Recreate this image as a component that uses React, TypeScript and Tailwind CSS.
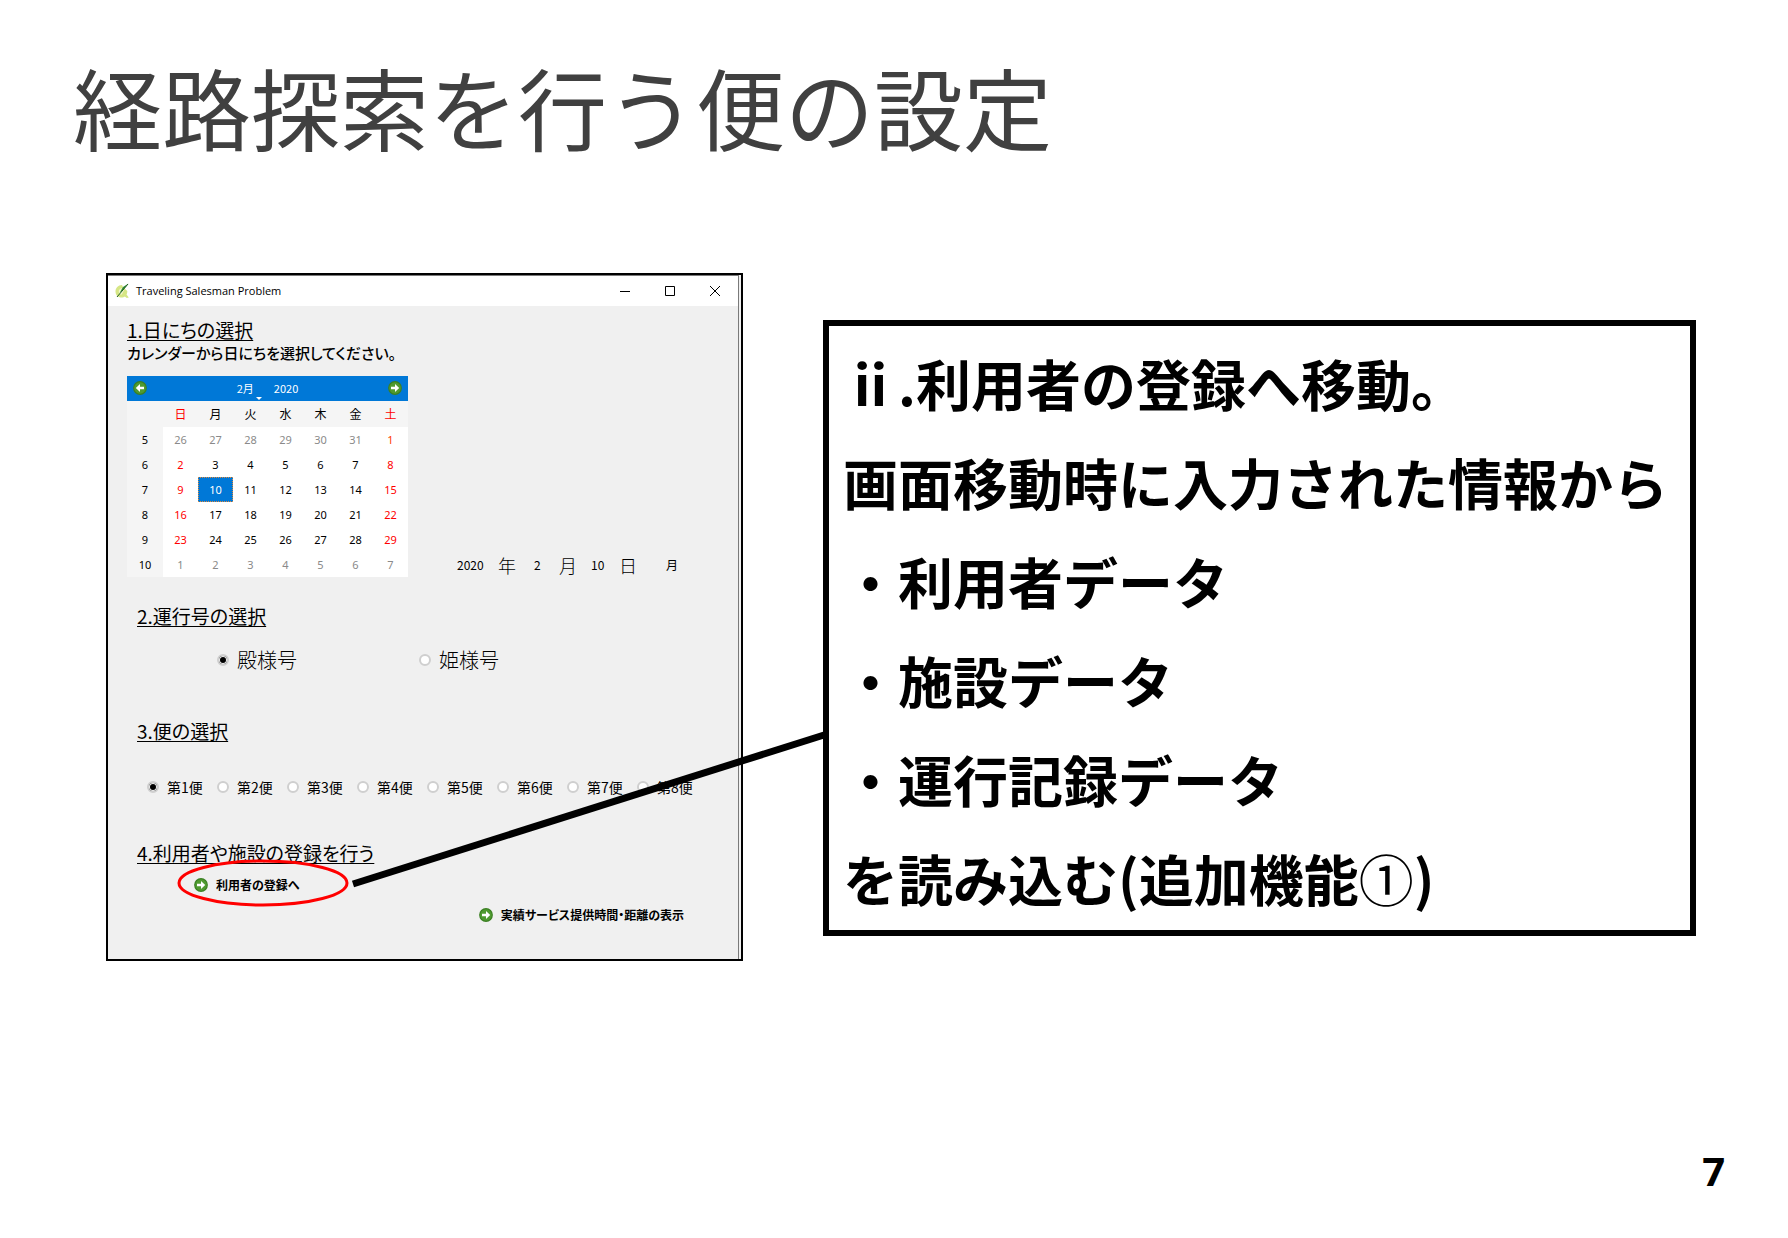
import React from "react";

const weekdays = ["日", "月", "火", "水", "木", "金", "土"];

const weeks = [
  { no: 5, days: [26, 27, 28, 29, 30, 31, 1] },
  { no: 6, days: [2, 3, 4, 5, 6, 7, 8] },
  { no: 7, days: [9, 10, 11, 12, 13, 14, 15] },
  { no: 8, days: [16, 17, 18, 19, 20, 21, 22] },
  { no: 9, days: [23, 24, 25, 26, 27, 28, 29] },
  { no: 10, days: [1, 2, 3, 4, 5, 6, 7] },
];

const trips = ["第1便", "第2便", "第3便", "第4便", "第5便", "第6便", "第7便", "第8便"];

const callout = ["ⅱ.利用者の登録へ移動。", "画面移動時に入力された情報から", "・利用者データ", "・施設データ", "・運行記録データ"];

function ArrowIcon({ left = false }: { left?: boolean }) {
  return (
    <svg viewBox="0 0 14 14" className={left ? "size-[14px] shrink-0 rotate-180" : "size-[14px] shrink-0"} aria-hidden="true">
      <circle cx="7" cy="7" r="6.9" fill="#3a7f22" />
      <circle cx="7" cy="7" r="5.800" fill="#4f9a30" />
      <path d="M3 5.700h4V3.100L11.200 7 7 10.900V8.300H3z" fill="#fff" />
    </svg>
  );
}

function AppLogo() {
  return (
    <svg viewBox="0 0 16 16" className="size-4" aria-hidden="true">
      <path d="M8 2C4 2 1.500 5 1.500 8.500S4 14.500 7.500 14.500c1.500 0 2.500-.4 3.300-1l2 1.500 2-.5-2.300-3c.6-1 .8-2 .8-3.500L9 4z" fill="#d6e685" />
      <path d="M8 5C6 5.500 4.500 7 4.800 9s1.600 2.600 3 2.400l2-4z" fill="#f3f7cf" />
      <path d="M14.500.5L9 4 5.500 10 9.500 6.500z" fill="#2f8a35" />
      <path d="M14 1L3 14" stroke="#1f5f22" fill="none" />
    </svg>
  );
}

function Radio({ name, label, checked = false, big = false }: { name: string; label: string; checked?: boolean; big?: boolean }) {
  return (
    <label className={big ? "flex items-center gap-2 text-[20px] leading-6 font-light" : "flex w-[70px] items-center gap-2 text-[14px] leading-5"}>
      <input
        type="radio"
        name={name}
        defaultChecked={checked}
        className="size-3 shrink-0 appearance-none rounded-full border-2 border-[#cfcfcf] bg-white checked:bg-black checked:shadow-[inset_0_0_0_1px_#f4f4f4]"
      />
      <span className="whitespace-nowrap">{label}</span>
    </label>
  );
}

function Heading({ children }: { children: React.ReactNode }) {
  return (
    <h2 className="text-[19px] leading-6 underline decoration-1 underline-offset-2 [font-feature-settings:'palt']">{children}</h2>
  );
}

function dayColour(week: number, col: number, day: number) {
  if (day === 10 && week === 2) return "bg-[#0078d7] text-white outline-1 -outline-offset-1 outline-dotted outline-[#e08a3c]";
  if (week === 0 && col === 6) return "text-[#ff3c00]";
  if (week === 0 || week === 5) return "text-[#8a8a8a]";
  if (col === 0 || col === 6) return "text-[#ff0000]";
  return "text-black";
}

function Calendar() {
  return (
    <div className="w-[281px] bg-white">
      <div className="flex h-[25px] items-center bg-[#0078d7] px-[6px] pb-[2px] text-[11px] leading-4 text-white">
        <button type="button" aria-label="前の月">
          <ArrowIcon left />
        </button>
        <div className="flex flex-1 items-center justify-center gap-5">
          <button type="button" className="relative">
            2月
            <span className="absolute -right-2 -bottom-1 border-x-[3px] border-t-[3px] border-x-transparent border-t-white" />
          </button>
          <button type="button">2020</button>
        </div>
        <button type="button" aria-label="次の月">
          <ArrowIcon />
        </button>
      </div>
      <table className="w-full table-fixed border-collapse text-center">
        <colgroup>
          <col className="w-9" />
          {weekdays.map((d) => (
            <col key={d} />
          ))}
        </colgroup>
        <thead>
          <tr className="h-[26px] bg-[#f5f5f5] text-[12px] leading-4">
            <td />
            {weekdays.map((d, i) => (
              <th key={d} scope="col" className={i === 0 || i === 6 ? "p-0 font-normal text-[#ff0000]" : "p-0 font-normal"}>
                {d}
              </th>
            ))}
          </tr>
        </thead>
        <tbody className="font-['Noto_Sans','Noto_Sans_CJK_JP',sans-serif] text-[11px] leading-4">
          {weeks.map((w, r) => (
            <tr key={w.no} className="h-[25px]">
              <th scope="row" className="bg-[#f5f5f5] p-0 font-normal">
                {w.no}
              </th>
              {w.days.map((d, c) => (
                <td key={c} className={`p-0 ${dayColour(r, c, d)}`}>
                  {d}
                </td>
              ))}
            </tr>
          ))}
        </tbody>
      </table>
    </div>
  );
}

function AppWindow() {
  return (
    <section className="w-[637px] shrink-0 border-2 border-black bg-[#f0f0f0] text-black">
      <div className="mr-[2px] border-r border-[#7a7a7a]">
        <header className="flex h-[31px] items-center border-t border-[#7a7a7a] bg-white pl-[6px]">
          <AppLogo />
          <span className="ml-[6px] flex-1 font-['Open_Sans','Noto_Sans',sans-serif] text-[11px] leading-4">Traveling Salesman Problem</span>
          <div className="flex items-center gap-[35px] pr-[18px] pb-px">
            <button type="button" aria-label="最小化">
              <svg viewBox="0 0 10 10" className="size-[10px]" stroke="#000" fill="none">
                <path d="M0 5.500h10" />
              </svg>
            </button>
            <button type="button" aria-label="最大化">
              <svg viewBox="0 0 10 10" className="size-[10px]" stroke="#000" fill="none">
                <path d="M.5.5h9v9h-9z" />
              </svg>
            </button>
            <button type="button" aria-label="閉じる">
              <svg viewBox="0 0 10 10" className="size-[10px]" stroke="#000" fill="none">
                <path d="M0 0l10 10M10 0L0 10" />
              </svg>
            </button>
          </div>
        </header>
        <div className="flex flex-col pt-3 pb-[34px]">
          <div className="pl-[19px]">
            <Heading>1.日にちの選択</Heading>
            <p className="text-[15px] leading-[22px] font-medium [font-feature-settings:'palt']">カレンダーから日にちを選択してください。</p>
            <div className="mt-3 flex items-end">
              <Calendar />
              <div className="ml-[49px] flex h-6 items-center text-[12px] leading-6">
                <span className="w-[41px]">2020</span>
                <span className="w-9 text-[18px] font-light">年</span>
                <span className="w-[25px]">2</span>
                <span className="w-8 text-[18px] font-light">月</span>
                <span className="w-[28px]">10</span>
                <span className="w-[47px] text-[18px] font-light">日</span>
                <span>月</span>
              </div>
            </div>
          </div>
          <div className="flex flex-col pt-[27px] pl-[29px]">
            <Heading>2.運行号の選択</Heading>
            <div className="mt-5 flex gap-[122px] pl-20">
              <Radio name="bus" label="殿様号" checked big />
              <Radio name="bus" label="姫様号" big />
            </div>
            <div className="mt-[47px]">
              <Heading>3.便の選択</Heading>
            </div>
            <div className="mt-[34px] flex pl-[10px]">
              {trips.map((t, i) => (
                <Radio key={t} name="trip" label={t} checked={i === 0} />
              ))}
            </div>
            <div className="mt-11">
              <Heading>4.利用者や施設の登録を行う</Heading>
            </div>
            <div className="mt-[10px] pl-[57px]">
              <button type="button" className="flex items-center gap-2 text-[12px] leading-5 font-bold [font-feature-settings:'palt']">
                <ArrowIcon />
                利用者の登録へ
              </button>
            </div>
            <div className="mt-[10px] flex justify-end pr-[54px]">
              <button type="button" className="flex items-center gap-2 text-[12px] leading-5 font-bold">
                <ArrowIcon />
                <span className="[font-feature-settings:'palt']">実績サービス提供時間・距離の表示</span>
              </button>
            </div>
          </div>
        </div>
      </div>
    </section>
  );
}

export default function App() {
  return (
    <main className="flex min-h-screen flex-col bg-white font-['Noto_Sans_CJK_JP',sans-serif] text-black">
      <h1 className="pt-[50px] pl-[73px] text-[89px] leading-[112px] font-normal text-[#404040]">経路探索を行う便の設定</h1>
      <div className="relative mt-[111px] flex items-start gap-20 pr-[92px] pl-[106px]">
        <AppWindow />
        <section className="mt-[47px] min-w-0 flex-1 border-[6px] border-black px-[14px] pt-[7px] pb-[3px] text-[55px] leading-[99px] font-bold whitespace-nowrap">
          {callout.map((line) => (
            <p key={line}>{line}</p>
          ))}
          <p>
            を読み込む(追加機能<span className="font-normal">①</span>)
          </p>
        </section>
        <svg className="pointer-events-none absolute top-0 left-0 h-full w-full" fill="none" aria-hidden="true">
          <ellipse cx="263" cy="610" rx="84" ry="22" stroke="#ff0000" strokeWidth="3" />
          <path d="M353 611L824 462" stroke="#000" strokeWidth="7" />
        </svg>
      </div>
      <footer className="mt-auto self-end pr-[63px] pb-[41px] font-['Open_Sans','Noto_Sans',sans-serif] text-[40px] leading-[52px] font-bold">7</footer>
    </main>
  );
}
